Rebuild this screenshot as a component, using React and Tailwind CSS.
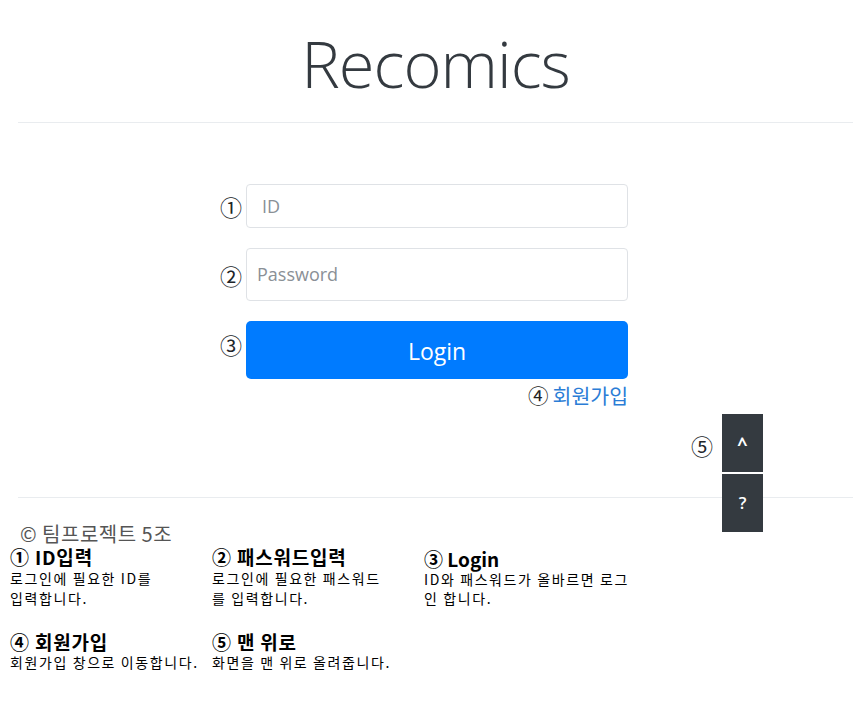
import React from "react";

const sans = "font-['Open_Sans','Noto_Sans_CJK_KR',sans-serif]";
const kr = "font-['Noto_Sans_CJK_KR',sans-serif]";

export default function App() {
  return (
    <div className={`relative min-h-[716px] w-[853px] bg-white text-[#212529] ${sans}`}>
      <div className="pl-[18px]">
        {/* Header */}
        <div className="flex h-[123px] items-center justify-center border-b border-[#e9ecef]">
          <h1 className="mt-[5px] text-[65px] font-light leading-none tracking-[-1px] text-[#343a40]">
            Recomics
          </h1>
        </div>

        {/* Form */}
        <div className="ml-[202px] mt-[61px] flex w-[408px] flex-col">
          <div className="flex items-center">
            <span className={`w-[26px] text-[22px] leading-none ${kr}`}>①</span>
            <div className="flex h-[44px] w-[382px] items-center rounded-[4px] border border-[#dfe2e6] pl-[15px] text-[18px] text-[#8a9096]">
              ID
            </div>
          </div>
          <div className="mt-[20px] flex items-center">
            <span className={`w-[26px] text-[22px] leading-none ${kr}`}>②</span>
            <div className="flex h-[53px] w-[382px] items-center rounded-[4px] border border-[#dfe2e6] pl-[10px] text-[18px] text-[#8a9096]">
              Password
            </div>
          </div>
          <div className="mt-[20px] flex items-start">
            <span className={`mt-[12px] w-[26px] text-[22px] leading-none ${kr}`}>③</span>
            <div className="flex h-[58px] w-[382px] items-center justify-center rounded-[5px] bg-[#007bff] pt-[2px] text-[23px] text-white">
              Login
            </div>
          </div>
          <div className={`mt-[4px] flex items-center justify-end text-[20.5px] leading-[24px] ${kr}`}>
            <span className="mr-[4px] text-[#222]">④</span>
            <span className="text-[#2b7dd6]">회원가입</span>
          </div>
        </div>

        {/* divider */}
        <div className="mt-[90px] border-b border-[#e9ecef]" />

        {/* footer */}
        <div className={`mt-[25px] pl-[2px] text-[20px] tracking-[0.5px] leading-[22px] text-[#555] ${kr}`}>
          © 팀프로젝트 5조
        </div>
      </div>

      {/* legend */}
      <div className={`ml-[10px] mt-[1px] ${kr} text-black`}>
        <div className="flex">
          <div className="w-[202px]">
            <div className="text-[19px] font-bold leading-[22px] tracking-[0.8px]">① ID입력</div>
            <div className="text-[14px] leading-[20px] tracking-[1.6px] whitespace-nowrap">
              로그인에 필요한 ID를<br />입력합니다.
            </div>
          </div>
          <div className="w-[212px]">
            <div className="text-[19px] font-bold leading-[22px] tracking-[0.8px]">② 패스워드입력</div>
            <div className="text-[14px] leading-[20px] tracking-[1.6px] whitespace-nowrap">
              로그인에 필요한 패스워드<br />를 입력합니다.
            </div>
          </div>
          <div className="w-[220px] pt-[2px]">
            <div className="text-[19px] font-bold leading-[22px]">③ Login</div>
            <div className="text-[14px] leading-[19px] tracking-[1.6px] whitespace-nowrap">
              ID와 패스워드가 올바르면 로그<br />인 합니다.
            </div>
          </div>
        </div>
        <div className="mt-[23px] flex">
          <div className="w-[202px]">
            <div className="text-[19px] font-bold leading-[22px] tracking-[0.8px]">④ 회원가입</div>
            <div className="text-[14px] leading-[19px] tracking-[1.6px] whitespace-nowrap">회원가입 창으로 이동합니다.</div>
          </div>
          <div className="w-[212px]">
            <div className="text-[19px] font-bold leading-[22px] tracking-[0.8px]">⑤ 맨 위로</div>
            <div className="text-[14px] leading-[19px] tracking-[1.6px] whitespace-nowrap">화면을 맨 위로 올려줍니다.</div>
          </div>
        </div>
      </div>

      {/* floating buttons */}
      <div className="absolute left-[691px] top-[414px] flex items-start">
        <span className={`mr-[9px] mt-[20px] text-[22px] leading-none ${kr}`}>⑤</span>
        <div className="flex flex-col gap-[2px]">
          <div className="flex h-[58px] w-[41px] items-center justify-center bg-[#343a40] pt-[3px] text-[18px] font-bold text-white">
            ^
          </div>
          <div className="flex h-[58px] w-[41px] items-center justify-center bg-[#343a40] text-[17px] font-semibold text-white">
            ?
          </div>
        </div>
      </div>
    </div>
  );
}
